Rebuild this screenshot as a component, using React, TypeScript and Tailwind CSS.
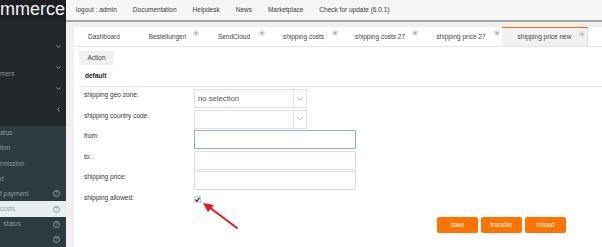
import React from 'react';

const topLinks = ['logout : admin', 'Documentation', 'Helpdesk', 'News', 'Marketplace', 'Check for update (6.0.1)'];

const tabs = [
  { label: 'Dashboard', w: 'w-[60px]', close: false },
  { label: 'Bestellungen', w: 'w-[67px]', close: true },
  { label: 'SendCloud', w: 'w-[66px]', close: true },
  { label: 'shipping costs', w: 'w-[73px]', close: true },
  { label: 'shipping costs 27', w: 'w-[80px]', close: true },
  { label: 'shipping price 27', w: 'w-[82px]', close: true },
];

const lowerItems = [
  { label: 'atus', help: false },
  { label: 'tion', help: false },
  { label: 'rmission', help: false },
  { label: 'd', help: false },
  { label: 'f payment', help: true },
  { label: 'costs', help: true, active: true },
  { label: '  status', help: true },
  { label: '', help: true },
];

function Chevron({ left = false }: { left?: boolean }) {
  return (
    <svg width="5" height="5" viewBox="0 0 10 10" className="text-[#8e999e]">
      {left ? (
        <path d="M7 1 L3 5 L7 9" fill="none" stroke="currentColor" strokeWidth="2" />
      ) : (
        <path d="M1 3 L5 7 L9 3" fill="none" stroke="currentColor" strokeWidth="2" />
      )}
    </svg>
  );
}

function Help() {
  return (
    <span className="flex h-[7px] w-[7px] items-center justify-center rounded-full border border-[#8e999e] text-[5px] leading-none text-[#8e999e]">
      ?
    </span>
  );
}

function Close() {
  return (
    <span className="absolute right-[2px] top-[3px] flex h-[6px] w-[6px] items-center justify-center rounded-full bg-[#e2e2e2] text-[5px] leading-none text-[#888]">
      ×
    </span>
  );
}

function Sidebar() {
  return (
    <aside className="flex w-[66px] shrink-0 flex-col">
      <div className="flex h-[21px] items-center overflow-hidden bg-[#1e2123] text-[18px] leading-none text-[#f2f2f2]">
        <span className="-mt-[3px] whitespace-nowrap">mmerce</span>
      </div>
      <div className="h-[105px] bg-[#23282b] pt-[15px] text-[#8e999e]">
        <div className="flex h-[21px] items-center justify-end pr-[5px]"><Chevron /></div>
        <div className="relative flex h-[21px] items-center justify-end pr-[5px]">
          <span className="absolute left-0 top-[14px] leading-none">mers</span>
          <Chevron />
        </div>
        <div className="flex h-[21px] items-center justify-end pr-[5px]"><Chevron /></div>
        <div className="flex h-[21px] items-center justify-end pr-[5px]"><Chevron left /></div>
      </div>
      <div className="flex-1 bg-[#2e3c42] text-[#8e999e]">
        {lowerItems.map((it, i) => (
          <div
            key={i}
            className={`flex h-[15.2px] items-center justify-between pr-[6px] whitespace-pre ${it.active ? 'bg-[#e8edf2] text-[#9aa3a8]' : ''}`}
          >
            <span>{it.label}</span>
            {it.help && <Help />}
          </div>
        ))}
      </div>
    </aside>
  );
}

function Select({ value }: { value?: string }) {
  return (
    <div className="flex h-[19px] w-[113px] border border-[#e1e1e1] bg-white">
      <div className="flex flex-1 items-center pl-[3px] text-[7.7px] text-[#555]">{value}</div>
      <div className="flex w-[13px] items-center justify-center border-l border-[#e1e1e1]">
        <svg width="6" height="4" viewBox="0 0 12 8">
          <path d="M1 1 L6 6 L11 1" fill="none" stroke="#999" strokeWidth="1.2" />
        </svg>
      </div>
    </div>
  );
}

function Input({ focus = false }: { focus?: boolean }) {
  return (
    <div className={`h-[19px] w-[162px] border bg-white ${focus ? 'border-[#8fb0d4]' : 'border-[#dedede]'}`} />
  );
}

function Row({ label, children }: { label: string; children: React.ReactNode }) {
  return (
    <div className="flex">
      <div className="w-[115px] pl-[5px] pt-[2px] leading-[8px] text-[#333]">{label}</div>
      {children}
    </div>
  );
}

export default function App() {
  return (
    <div className="relative flex h-[247px] w-[602px] overflow-hidden bg-white font-['Liberation_Sans',Arial,sans-serif] text-[6.5px] text-[#333]">
      <Sidebar />
      <div className="flex flex-1 flex-col bg-[#f0f0f0]">
        <div className="flex h-[22px] items-center gap-[16px] border-b-2 border-[#a9a9a9] bg-[#f5f5f5] pl-[10px] text-[#3c3c3c]">
          {topLinks.map((l) => (
            <span key={l} className="whitespace-nowrap">{l}</span>
          ))}
        </div>
        <div className="flex-1 pl-[8px] pt-[5px]">
          <div className="h-full bg-white">
            <div className="flex h-[20px] border-b border-[#e6e6e6]">
              {tabs.map((t) => (
                <div key={t.label} className={`relative flex ${t.w} items-center justify-center whitespace-nowrap text-[#444]`}>
                  {t.label}
                  {t.close && <Close />}
                </div>
              ))}
              <div className="relative flex w-[86px] items-center justify-center whitespace-nowrap border-r border-t-[1.5px] border-r-[#dcdcdc] border-t-[#ff6a00] bg-[#f1f1f1] text-[#444]">
                shipping price new
                <Close />
              </div>
            </div>
            <div className="pl-[5px] pt-[4px]">
              <div className="flex h-[14px] w-[35px] items-center justify-center bg-[#f1f1f1] text-[#444]">Action</div>
              <div className="flex h-[22px] items-center border-b-[1.5px] border-[#e6e6e6] pl-[6px] font-bold text-[#222]">default</div>
              <div className="flex flex-col gap-[1.5px] pt-[2px]">
                <Row label="shipping geo zone:"><Select value="no selection" /></Row>
                <Row label="shipping country code:"><Select /></Row>
                <Row label="from:"><Input focus /></Row>
                <Row label="to:"><Input /></Row>
                <Row label="shipping price:"><Input /></Row>
                <Row label="shipping allowed:">
                  <div className="pt-[4px]">
                    <svg width="7" height="7" viewBox="0 0 14 14">
                      <rect x="0.5" y="0.5" width="13" height="13" rx="2" fill="#e4e4e4" stroke="#9a9a9a" />
                      <path d="M3 7.5 L6 10.5 L11 3.5" fill="none" stroke="#222" strokeWidth="2.2" />
                    </svg>
                  </div>
                </Row>
              </div>
              <div className="mt-[14px] flex justify-end gap-[3px] pr-[36px]">
                {['save', 'transfer', 'reload'].map((b) => (
                  <button key={b} className="flex h-[16px] w-[41px] items-center justify-center rounded-[2px] bg-[#ff7400] text-white">
                    {b}
                  </button>
                ))}
              </div>
            </div>
          </div>
        </div>
      </div>
      <svg className="pointer-events-none absolute left-0 top-0" width="602" height="247">
        <line x1="237" y1="228" x2="209" y2="207" stroke="#e3191f" strokeWidth="2" strokeLinecap="round" />
        <polygon points="203,203 214,205 208,212" fill="#e3191f" />
      </svg>
    </div>
  );
}
